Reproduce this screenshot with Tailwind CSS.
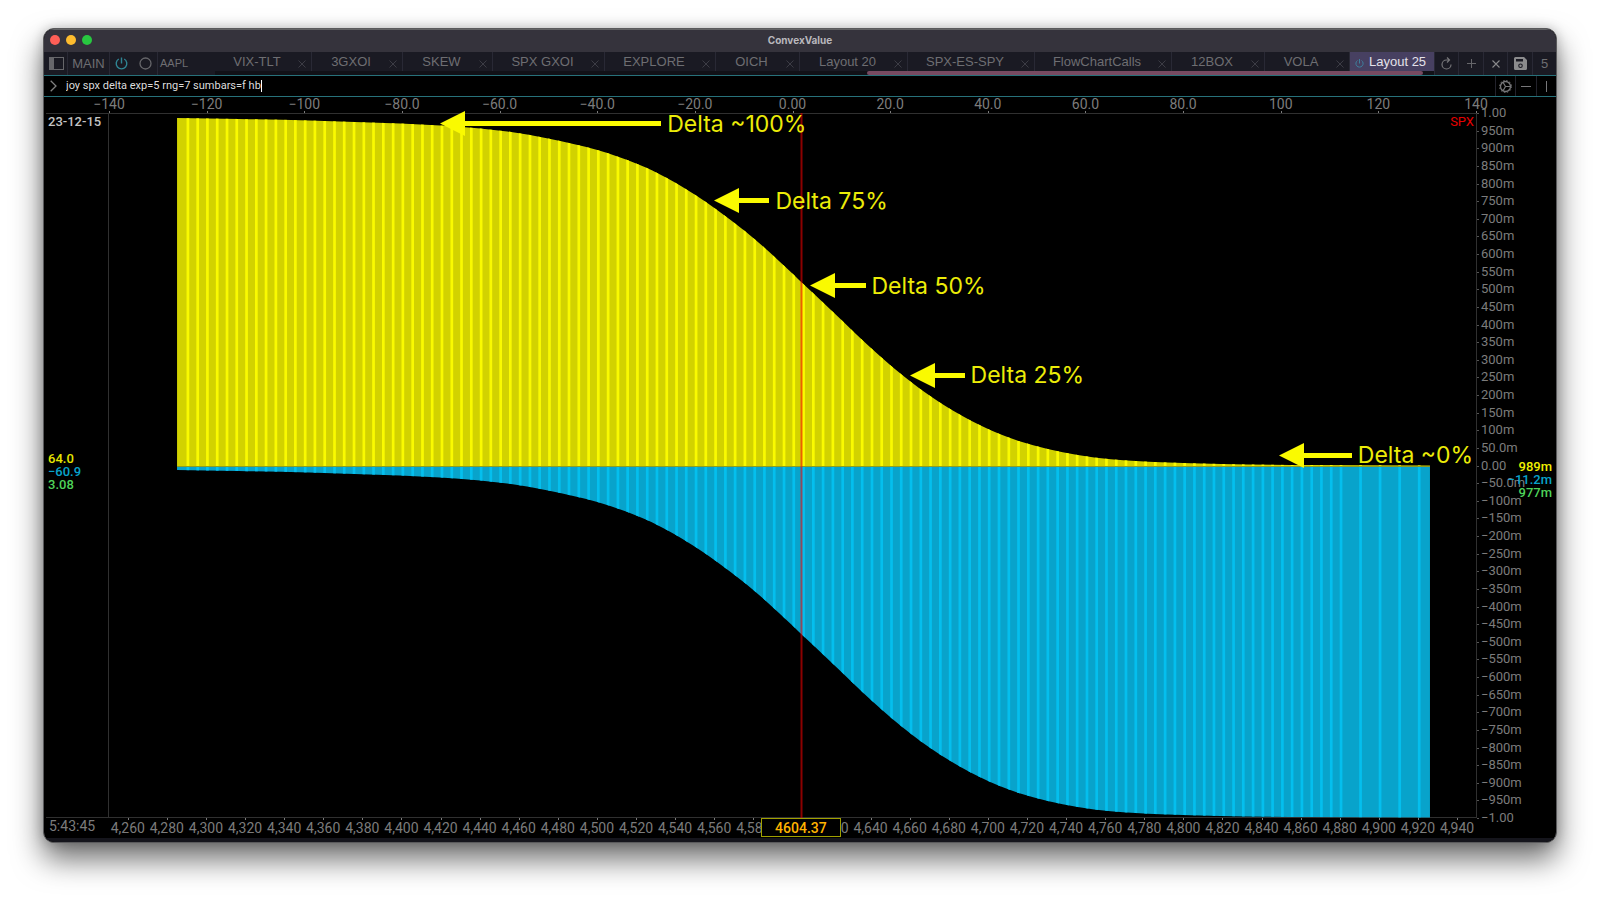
<!DOCTYPE html>
<html lang="en">
<head>
<meta charset="utf-8">
<title>ConvexValue</title>
<script src="https://cdn.jsdelivr.net/npm/@tailwindcss/browser@4"></script>
</head>
<body class="bg-white">
<div class="flex h-screen overflow-hidden px-[43px] pt-[28px] pb-[57px]">
<main class="relative flex min-w-0 flex-1 flex-col overflow-hidden rounded-[11px] border border-[#5a5a5c] bg-black font-['Liberation_Sans',sans-serif] shadow-[0_16px_30px_rgba(0,0,0,0.58),0_0_12px_rgba(0,0,0,0.2)]">
  <header class="relative flex h-[23px] shrink-0 items-center justify-center border-t border-[#636365] bg-[#35333c] pb-[2px]">
    <div class="absolute left-[6px] flex gap-[6px]">
      <button aria-label="Close" class="size-[10px] rounded-full bg-[#ff5f57]"></button>
      <button aria-label="Minimize" class="size-[10px] rounded-full bg-[#febc2e]"></button>
      <button aria-label="Zoom" class="size-[10px] rounded-full bg-[#28c840]"></button>
    </div>
    <h1 class="font-['Inter',sans-serif] text-[10px] font-bold text-[#b9b8bc]">ConvexValue</h1>
  </header>

  <nav class="flex h-[23px] shrink-0 bg-[#1a1a23] text-[13px] text-[#6e6e72]">
    <button aria-label="Toggle sidebar" class="flex w-[24px] items-center justify-center border-r border-[#292935] pl-[1px]">
      <svg width="15" height="13" viewBox="0 0 15 13"><rect x=".5" y=".5" width="14" height="12" fill="none" stroke="#66666a"/><path d="M0 0h5v13H0z" fill="#66666a"/></svg>
    </button>
    <button class="w-[42px] border-r border-[#292935]">MAIN</button>
    <div class="flex w-[48px] items-center justify-center gap-[11px] border-r border-[#292935]">
      <button aria-label="Power"><svg width="13" height="13" viewBox="0 0 13 13" fill="none" stroke="#2f8493" stroke-width="1.4"><path d="M6.500 .5v6M3.800 2A5.300 5.300 0 1 0 9.200 2"/></svg></button>
      <button aria-label="Record"><svg width="13" height="13" viewBox="0 0 13 13" fill="none" stroke="#66666a" stroke-width="1.3"><circle cx="6.500" cy="6.500" r="5.500"/></svg></button>
    </div>
    <button class="px-[2px] text-[11px]">AAPL</button>
    <div class="flex min-w-0 flex-1 flex-col items-end">
      <div id="tabs" class="flex h-[19px]"></div>
      <div class="flex h-[4px] w-[1219px] bg-[#111117]"><span class="ml-[652px] w-[556px] rounded-sm bg-[#774a61]"></span></div>
    </div>
    <button aria-label="Reload" class="flex w-[24px] items-center justify-center border-l border-[#292935]"><svg width="13" height="13" viewBox="0 0 13 13" fill="none" stroke="#77777a" stroke-width="1.200"><path d="M7 .500 9.500 3 7 5.500M9.500 3H6.500A4.500 4.500 0 1 0 11 7.500"/></svg></button>
    <button aria-label="Add" class="flex w-[25px] items-center justify-center border-l border-[#292935]"><svg width="9" height="9" viewBox="0 0 9 9" stroke="#66666a"><path d="M4.500 0v9M0 4.500h9"/></svg></button>
    <button aria-label="Close layout" class="flex w-[24px] items-center justify-center border-l border-[#292935]"><svg width="8" height="8" viewBox="0 0 8 8" stroke="#88888a" stroke-width="1.100"><path d="m.5.5 7 7m0-7-7 7"/></svg></button>
    <button aria-label="Save" class="flex w-[25px] items-center justify-center border-l border-[#292935]"><svg width="13" height="13" viewBox="0 0 13 13"><path fill="#8b8b8d" fill-rule="evenodd" d="M1.500 0H10l3 3v8.500a1.500 1.500 0 0 1-1.500 1.500h-10A1.500 1.500 0 0 1 0 11.500v-10A1.500 1.500 0 0 1 1.500 0ZM2 2v2.500h7V2ZM6.500 6.500a2.300 2.300 0 1 0 0 4.600 2.300 2.300 0 0 0 0-4.600Z"/><circle cx="6.500" cy="8.800" r="1.200" fill="#8b8b8d"/></svg></button>
    <button class="w-[24px] border-l border-[#292935]">5</button>
  </nav>

  <form class="flex h-[22px] shrink-0 items-stretch border-y border-[#27717a] bg-black" onsubmit="return false">
    <label for="cmd" class="flex w-[22px] items-center pl-[6px]" aria-label="Command"><svg width="7" height="12" viewBox="0 0 7 12" fill="none" stroke="#808080" stroke-width="1.300"><path d="m.7.7 5.300 5.300-5.300 5.300"/></svg></label>
    <div class="flex min-w-0 flex-1 items-center">
      <input id="cmd" class="field-sizing-content bg-transparent font-['Roboto',sans-serif] text-[11px] text-[#dcdcdc] outline-none" value="joy spx delta exp=5 rng=7 sumbars=f hb">
      <span class="h-[12px] w-px bg-white"></span>
    </div>
    <button aria-label="Settings" class="flex w-[20px] items-center justify-center border-l border-[#23232c]"><svg width="13" height="13" viewBox="0 0 13 13" fill="none" stroke="#77777a"><circle cx="6.500" cy="6.500" r="5" stroke-width="1.300"/><circle cx="6.500" cy="6.500" r="6" stroke-dasharray="1.500 1.640"/><path d="M6.500 6.500h5M6.500 6.500 4 2.200M6.500 6.500 4 10.800" stroke-width="1.200"/></svg></button>
    <button aria-label="Split horizontally" class="flex w-[21px] items-center justify-center border-l border-[#23232c]"><span class="h-px w-[10px] bg-[#77777a]"></span></button>
    <button aria-label="Split vertically" class="flex w-[20px] items-center justify-center border-l border-[#23232c]"><span class="h-[11px] w-px bg-[#77777a]"></span></button>
  </form>

  <section aria-label="SPX delta by strike" class="grid min-h-0 flex-1 grid-cols-[65px_1fr_80px] grid-rows-[16px_1fr_20px] font-['Roboto',sans-serif] text-[14px] leading-[16px] text-[#7c7c7c]">
    <div></div>
    <div id="axisTop" class="relative"></div>
    <div></div>

    <div class="relative ml-[2px] border-y border-r border-[#303030]">
      <p class="pl-[2px] text-[13px] font-medium text-[#c4c4c4]">23-12-15</p>
      <div class="absolute top-1/2 left-[2px] flex -translate-y-1/2 flex-col pt-[10px] text-[13px] font-medium leading-[13px]">
        <span class="text-[#e6e600]">64.0</span><span class="text-[#08a3cb]">−60.9</span><span class="text-[#4fd35a]">3.08</span>
      </div>
    </div>
    <div id="plot" class="relative border-y border-[#303030]">
      <svg id="bars" class="absolute inset-x-0 -inset-y-px h-[calc(100%_+_2px)] w-full" viewBox="0 0 1366 705" preserveAspectRatio="none"></svg>
      <span class="absolute top-0 right-[2px] text-[13px] text-[#e60000]">SPX</span>
    </div>
    <div class="relative border-l border-[#303030]">
      <div id="axisRight" class="absolute inset-0 text-[13px]"></div>
      <div class="absolute top-1/2 right-[4px] flex -translate-y-1/2 flex-col pt-[26px] text-right text-[13px] font-medium leading-[13px]">
        <span class="text-[#f0f000]">989m</span><span class="text-[#08a3cb]">−11.2m</span><span class="text-[#4fd35a]">977m</span>
      </div>
    </div>

    <div class="pl-[5px]">5:43:45</div>
    <div id="axisBottom" class="relative"></div>
    <div></div>
  </section>
  <footer class="h-[4px] shrink-0 bg-[#15151c]"></footer>
</main>
</div>

<script>
const $ = id => document.getElementById(id);
const W = 1366, H = 705;

// Layout tabs: name and width
const cross = '<svg class="shrink-0" width="8" height="8" viewBox="0 0 8 8" stroke="#3c3c45"><path d="m.5.5 7 7m0-7-7 7"/></svg>';
$('tabs').innerHTML = [['VIX-TLT',97],['3GXOI',91],['SKEW',90],['SPX GXOI',112],['EXPLORE',111],['OICH',84],['Layout 20',108],['SPX-ES-SPY',127],['FlowChartCalls',137],['12BOX',93],['VOLA',85]]
  .map(([n, w]) => `<div class="flex items-center border-r border-[#292935] pr-[5px]" style="width:${w}px"><button class="flex-1 pr-[1px] pl-[2px] text-center whitespace-nowrap">${n}</button><button aria-label="Close ${n}" class="pt-[5px]">${cross}</button></div>`).join('') +
  '<button class="flex w-[84px] items-center gap-[5px] bg-[#474061] pl-[5px] whitespace-nowrap text-[#e4e2ea]"><svg class="mt-[3px]" width="9" height="9" viewBox="0 0 9 9" fill="none" stroke="#3f7f9c"><path d="M4.500 0v4.500M2.500 1.500a3.600 3.600 0 1 0 4 0"/></svg>Layout 25</button>';

// Cumulative call delta by strike; puts complete it to one
const pts = [[68,5],[130,6],[200,7.5],[291,10.500],[331,12.500],[362,14.700],[398,18.500],[440,25.700],[488,37],[528,51],[557,64.700],[586,82],[607,96.500],[636,118.500],[655,134.700],[684,161.500],[693,170.300],[713,189],[733,208],[753,227.300],[772,244.500],[792,261.500],[811,276.300],[831,290],[851,302],[870,312],[890,321],[909,328],[938,336],[968,342],[1001,346.300],[1051,349.300],[1111,351],[1200,352],[1320,352.500]];
const curve = dy => pts.slice(0, -1).map((p, i) => {
  const a = pts[i - 1] || p, b = pts[i + 1], c = pts[i + 2] || b;
  const s0 = (b[1] - a[1]) / (b[0] - a[0]), s1 = (c[1] - p[1]) / (c[0] - p[0]), h = (b[0] - p[0]) / 3;
  return `C${p[0] + h} ${p[1] + s0 * h + dy} ${b[0] - h} ${b[1] - s1 * h + dy} ${b[0]} ${b[1] + dy}`;
}).join('');
const zero = 353, callArea = `M68 ${zero}V5${curve(0)}V${zero}Z`, putArea = `M68 ${zero}V357${curve(352)}V${zero}Z`;
let stripes = '';
for (let k = 0; k <= 126; k += k < 118 ? 1 : 2) stripes += `M${(77.500 + k * 9.765).toFixed(1)} 0h2.700v${H}h-2.700Z`;
$('bars').innerHTML = `<clipPath id="ct"><path d="${callArea}"/></clipPath><clipPath id="cl"><path d="${putArea}"/></clipPath>
<path d="${callArea}" fill="#d2d200"/><path d="${putArea}" fill="#08a3cb"/>
<path d="${stripes}" fill="#fafa00" clip-path="url(#ct)"/><path d="${stripes}" fill="#04bfee" clip-path="url(#cl)"/>
<path d="M68 353.500H1320" stroke="#8f9f20"/><path d="M691 0h2v${H}h-2Z" fill="#ff0000" fill-opacity=".55"/>`;

// Axes
const num = v => v === 0 ? '0.00' : (v < 0 ? '−' : '') + (Math.abs(v) < 100 ? Math.abs(v).toFixed(1) : Math.abs(v));
for (let v = -140; v <= 140; v += 20)
  $('axisTop').innerHTML += `<span class="absolute -top-[1px] -translate-x-1/2 whitespace-nowrap" style="left:${(v + 140) / 2.8}%">${num(v)}</span><i class="absolute bottom-0 h-[2px] w-px bg-[#7c7c7c]" style="left:${(v + 140) / 2.8}%"></i>`;
for (let v = 1000; v >= -1000; v -= 50) {
  const a = Math.abs(v), t = v === 0 ? '0.00' : (v < 0 ? '−' : '') + (a === 1000 ? '1.00' : a === 50 ? '50.0m' : a + 'm');
  $('axisRight').innerHTML += `<i class="absolute left-0 h-px w-[2px] bg-[#555555]" style="top:${(1000 - v) / 20}%"></i><span class="absolute left-[4px] -translate-y-1/2 whitespace-nowrap" style="top:${(1000 - v) / 20}%">${t}</span>`;
}
const lo = 4250.400, span = 699.300, pos = v => (v - lo) / span * 100;
for (let v = 4260; v <= 4940; v += 20)
  $('axisBottom').innerHTML += `<i class="absolute top-0 h-[2px] w-px bg-[#7c7c7c]" style="left:${pos(v)}%"></i><span class="absolute top-[2px] -translate-x-1/2 whitespace-nowrap" style="left:${pos(v)}%">${v.toLocaleString('en-US')}</span>`;
$('axisBottom').innerHTML += `<output class="absolute top-0 flex h-[19px] w-[80px] -translate-x-1/2 items-center justify-center border border-[#a0a000] bg-black font-medium text-[#ffb300]" style="left:${pos(4604.370)}%">4604.37</output>`;

// Annotations: label, arrow tip, arrow length
for (const [t, x, y, len] of [['Delta ~100%',331,10,221],['Delta 75%',605,87,55],['Delta 50%',700,172,56],['Delta 25%',800,262,55],['Delta ~0%',1169,342,73]])
  $('plot').innerHTML += `<div class="absolute flex -translate-y-1/2 items-center gap-[6px] font-['Inter',sans-serif] text-[23px] leading-[26px] whitespace-nowrap text-[#ecec08]" style="left:${x / W * 100}%;top:${y / H * 100}%"><span class="flex items-center" style="width:${len}px"><svg class="shrink-0" width="25" height="25" viewBox="0 0 25 25"><path d="M0 12.500 25 0v25Z" fill="#fafa00"/></svg><i class="h-[5px] flex-1 bg-[#fafa00]"></i></span>${t}</div>`;
</script>
</body>
</html>
